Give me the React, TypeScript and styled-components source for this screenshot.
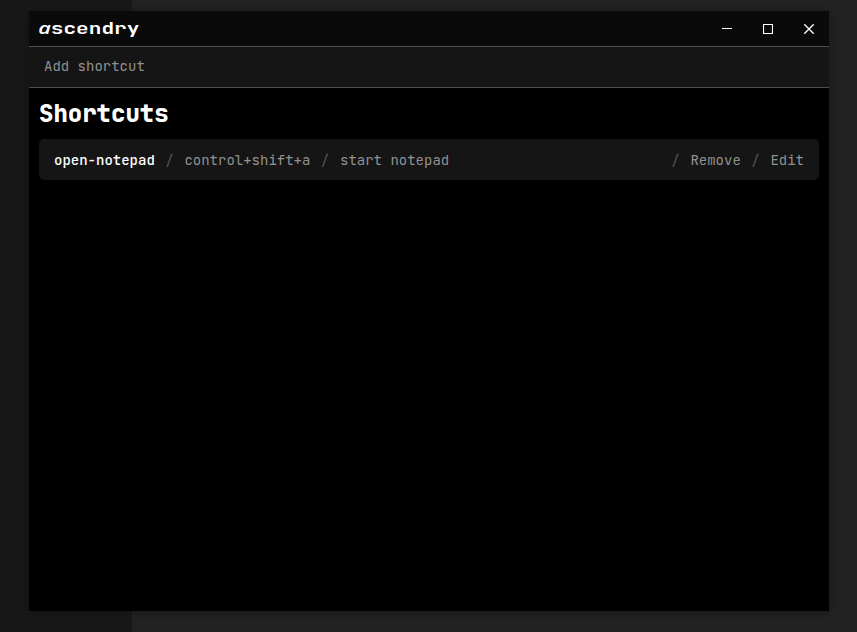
import React from "react";
import styled, { createGlobalStyle } from "styled-components";

const GlobalStyle = createGlobalStyle`
  * { box-sizing: border-box; }
  body {
    margin: 0;
    overflow: hidden;
    background: #222;
    font-family: "JetBrains Mono", "DejaVu Sans Mono", monospace;
  }
`;

const Desktop = styled.div`
  width: 100%;
  height: 100vh;
  padding: 11px 28px 21px 29px;
  background: linear-gradient(90deg, #181818 132px, #222 132px);
`;

const Window = styled.main`
  display: flex;
  flex-direction: column;
  width: 800px;
  height: 600px;
  background: #000;
  box-shadow: 0 1px 9px rgba(0, 0, 0, 0.3);
`;

const TitleBar = styled.header`
  display: flex;
  align-items: center;
  justify-content: space-between;
  height: 36px;
  padding-left: 10px;
  background: #0a0a0a;
  border-bottom: 1px solid #505050;
`;

const Brand = styled.svg`
  display: block;
  width: 102px;
  height: 28px;
  overflow: visible;
  fill: #fff;
  font-family: "JetBrains Mono", "DejaVu Sans Mono", monospace;
  font-size: 16.5px;
`;

const BrandInitial = styled.tspan`
  font-family: "Open Sans", "Noto Sans", sans-serif;
  font-size: 17px;
  font-style: italic;
`;

const Controls = styled.nav`
  display: flex;
`;

const ControlButton = styled.button`
  display: grid;
  place-items: center;
  width: 41px;
  height: 35px;
  padding: 1px 0 0 1px;
  border: 0;
  background: transparent;
  color: #fff;

  svg {
    display: block;
    fill: none;
    stroke: currentColor;
  }
`;

const Toolbar = styled.div`
  display: flex;
  align-items: center;
  height: 41px;
  padding: 0 15px 2px;
  background: #151515;
  border-bottom: 1px solid #505050;
`;

const TextButton = styled.button<{ $strong?: boolean }>`
  padding: 0;
  border: 0;
  background: transparent;
  color: ${(p) => (p.$strong ? "#fff" : "#919191")};
  font: ${(p) => (p.$strong ? 500 : 400)} 14px/20px "JetBrains Mono", "DejaVu Sans Mono", monospace;
  white-space: pre;
`;

const Content = styled.section`
  padding: 10px 10px;
`;

const Heading = styled.h1`
  margin: 0 0 9px;
  color: #fff;
  font-size: 24px;
  font-weight: 800;
  line-height: 32px;
`;

const Shortcut = styled.article`
  display: flex;
  align-items: center;
  height: 41px;
  padding: 0 15px;
  border-radius: 5px;
  background: #151515;
`;

const Actions = styled.div`
  display: flex;
  align-items: center;
  margin-left: auto;
`;

const Slash = styled.span`
  width: 29.6px;
  padding-right: 0.4px;
  color: #565656;
  font-size: 14px;
  line-height: 20px;
  text-align: center;
`;

const Separator = () => <Slash aria-hidden="true">/</Slash>;

export default function App() {
  return (
    <>
      <GlobalStyle />
      <Desktop>
        <Window>
          <TitleBar>
            <Brand viewBox="0 0 102 28">
              <text transform="translate(-0.8 19) scale(1.28 1)" fontWeight="600">
                <BrandInitial x="0.1">a</BrandInitial><tspan x="9.8">scendry</tspan>
              </text>
            </Brand>
            <Controls>
              <ControlButton aria-label="Minimize">
                <svg width="10" height="11"><path d="M0 4.5h10" /></svg>
              </ControlButton>
              <ControlButton aria-label="Maximize">
                <svg width="10" height="10"><rect x="0.5" y="0.5" width="9" height="9" rx="0.3" strokeWidth="1.15" /></svg>
              </ControlButton>
              <ControlButton aria-label="Close">
                <svg width="10" height="10"><path d="m.3.3 9.4 9.4m0-9.4-9.4 9.4" strokeWidth="1.35" /></svg>
              </ControlButton>
            </Controls>
          </TitleBar>
          <Toolbar>
            <TextButton>Add shortcut</TextButton>
          </Toolbar>
          <Content>
            <Heading>Shortcuts</Heading>
            <Shortcut>
              <TextButton $strong>open-notepad</TextButton>
              <Separator />
              <TextButton>control+shift+a</TextButton>
              <Separator />
              <TextButton>start notepad</TextButton>
              <Actions>
                <Separator />
                <TextButton>Remove</TextButton>
                <Separator />
                <TextButton>Edit</TextButton>
              </Actions>
            </Shortcut>
          </Content>
        </Window>
      </Desktop>
    </>
  );
}
